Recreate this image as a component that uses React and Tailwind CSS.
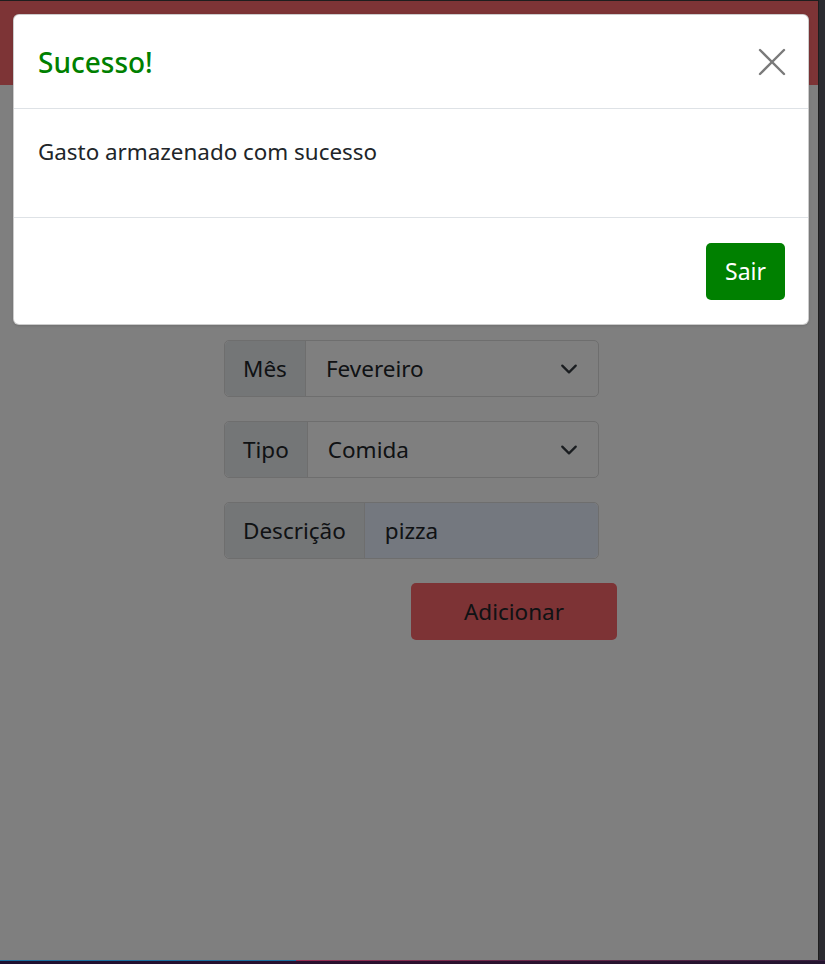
import React from 'react';

const font = { fontFamily: '"Noto Sans", "Open Sans", sans-serif' };

const Chevron = () => (
  <svg width="18" height="18" viewBox="0 0 16 16" fill="none" stroke="#343a40" strokeWidth="2" strokeLinecap="round" strokeLinejoin="round">
    <path d="M2 5l6 6 6-6" />
  </svg>
);

const App = () => {
  return (
    <div className="relative w-[825px] h-[964px] overflow-hidden bg-[#2b2b30]" style={font}>
      <div className="flex h-[960px] flex-col border-t border-[#3c3c3c] w-[819px] border-r bg-white">
        <div className="h-[84px] bg-[#fa686c]" />
        <div className="flex flex-col items-start pl-[224px] pt-[255px] gap-6">
          <div className="flex h-[57px] w-[375px] rounded-[5px] border border-[#dcdcdc] text-[22.5px] text-[#212529]">
            <div className="flex items-center px-[18px] bg-[#e9ecef] border-r border-[#dcdcdc] rounded-l-[5px]">Mês</div>
            <div className="flex flex-1 items-center justify-between pl-5 pr-5">
              <span>Fevereiro</span>
              <Chevron />
            </div>
          </div>
          <div className="flex h-[57px] w-[375px] rounded-[5px] border border-[#dcdcdc] text-[22.5px] text-[#212529]">
            <div className="flex items-center px-[18px] bg-[#e9ecef] border-r border-[#dcdcdc] rounded-l-[5px]">Tipo</div>
            <div className="flex flex-1 items-center justify-between pl-5 pr-5">
              <span>Comida</span>
              <Chevron />
            </div>
          </div>
          <div className="flex h-[57px] w-[375px] rounded-[5px] border border-[#dcdcdc] text-[22.5px] text-[#212529]">
            <div className="flex items-center px-[18px] bg-[#e9ecef] border-r border-[#dcdcdc] rounded-l-[5px]">Descrição</div>
            <div className="flex flex-1 items-center pl-5 bg-[#e8f0fe] rounded-r-[5px]">pizza</div>
          </div>
          <button className="ml-[187px] h-[57px] w-[206px] rounded-[5px] bg-[#fa666a] text-[22.5px] text-[#212529]">
            Adicionar
          </button>
        </div>
      </div>
      <div className="flex h-px">
        <div className="w-[296px] bg-[#1d6fa0]" />
        <div className="flex-1 bg-gradient-to-r from-[#9a2f55] to-[#3a2040]" />
      </div>
      <div className="h-[3px] bg-gradient-to-r from-[#1e1030] via-[#2c0f2e] to-[#241530]" />
      <div className="absolute inset-0 bottom-[4px] right-[6px] bg-black/50" />
      <div className="absolute left-[13px] top-[14px] w-[796px] rounded-[6px] border border-black/20 bg-white shadow">
        <div className="flex h-[94px] items-center justify-between border-b border-[#dee2e6] pl-[24px] pr-[22px]">
          <h5 className="text-[28px] font-medium text-[#008000]">Sucesso!</h5>
          <svg width="28" height="28" viewBox="0 0 28 28" stroke="#7a7a7a" strokeWidth="2.4" strokeLinecap="round">
            <path d="M2 2l24 24M26 2L2 26" />
          </svg>
        </div>
        <div className="h-[109px] border-b border-[#dee2e6] px-[24px] pt-[26px] text-[22.4px] text-[#212529]">
          Gasto armazenado com sucesso
        </div>
        <div className="flex h-[106px] items-center justify-end pr-[23px]">
          <button className="h-[57px] w-[79px] rounded-[5px] bg-[#008000] text-[23px] text-white">Sair</button>
        </div>
      </div>
    </div>
  );
};

export default App;
